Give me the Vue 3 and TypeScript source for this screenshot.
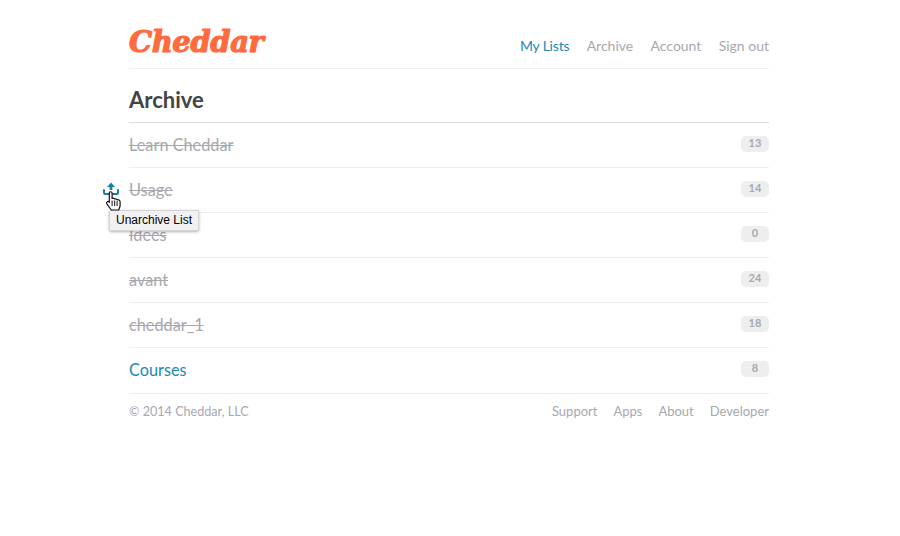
<script setup lang="ts">
interface ArchivedList {
  name: string;
  count: number;
  archived: boolean;
}

const navLinks = ["My Lists", "Archive", "Account", "Sign out"];
const footerLinks = ["Support", "Apps", "About", "Developer"];

const lists: ArchivedList[] = [
  { name: "Learn Cheddar", count: 13, archived: true },
  { name: "Usage", count: 14, archived: true },
  { name: "Idees", count: 0, archived: true },
  { name: "avant", count: 24, archived: true },
  { name: "cheddar_1", count: 18, archived: true },
  { name: "Courses", count: 8, archived: false },
];
</script>

<template>
  <div class="page">
    <header class="header">
      <a class="logo">Cheddar</a>
      <nav class="nav">
        <a
          v-for="(link, i) in navLinks"
          :key="link"
          class="nav-link"
          :class="{ active: i === 0 }"
        >{{ link }}</a>
      </nav>
    </header>

    <h1 class="title">Archive</h1>

    <ul class="lists">
      <li v-for="list in lists" :key="list.name" class="row">
        <span class="name" :class="{ archived: list.archived }">{{ list.name }}</span>
        <span class="count">{{ list.count }}</span>

        <template v-if="list.name === 'Usage'">
          <svg class="unarchive" width="18" height="14" viewBox="0 0 18 14">
            <path d="M9 0.5 L13 5 H10.4 V8 H7.6 V5 H5 Z" fill="#1a7fa8" />
            <path d="M2 8 V11 Q2 12 3 12 H15 Q16 12 16 11 V8" fill="none" stroke="#1a7fa8" stroke-width="2" stroke-linecap="round" />
          </svg>
          <svg class="hand" width="17" height="20" viewBox="0 0 16 20">
            <path
              d="M4.2 1 C5.4 0.4 6.6 1 6.6 2.4 V7.5 C7.6 7 8.8 7.2 9.2 8 C10.2 7.6 11.3 8 11.6 8.8 C12.8 8.5 14.6 9.2 14.6 10.8 V15 L13.2 19 H5.8 L1.4 12.8 C0.4 11.2 2.2 9.8 3.4 10.8 L3.8 11.4 V2.4 C3.8 1.8 3.9 1.2 4.2 1 Z"
              fill="#fff"
              stroke="#111"
              stroke-width="1.2"
              stroke-linejoin="round"
            />
            <path d="M6.6 9.5 V15 M9.2 9.5 V15 M11.6 10 V15" stroke="#111" stroke-width="1" fill="none" />
          </svg>
          <span class="tooltip">Unarchive List</span>
        </template>
      </li>
    </ul>

    <footer class="footer">
      <span class="copyright">© 2014 Cheddar, LLC</span>
      <nav class="footer-nav">
        <a v-for="link in footerLinks" :key="link" class="footer-link">{{ link }}</a>
      </nav>
    </footer>
  </div>
</template>

<style>
body {
  background: #fff;
}
</style>

<style scoped>
.page {
  width: 640px;
  margin-left: 129px;
  font-family: Lato, "Open Sans", sans-serif;
  color: #a8a8ae;
}

.header {
  height: 68px;
  border-bottom: 1px solid #eeeeee;
  display: flex;
  justify-content: space-between;
  align-items: flex-start;
}

.logo {
  margin-top: 23px;
  font-family: "DejaVu Serif", serif;
  font-weight: 700;
  font-style: italic;
  font-size: 29px;
  line-height: 38px;
  letter-spacing: -0.4px;
  color: #ff6b3d;
  -webkit-text-stroke: 1.2px #ff6b3d;
}

.nav {
  display: flex;
  gap: 17.3px;
  margin-top: 37px;
  font-size: 14px;
  line-height: 18px;
}

.nav-link {
  color: #a8a8ae;
}

.nav-link.active {
  color: #1f87b4;
  letter-spacing: -0.2px;
}

.title {
  margin: 0;
  height: 53px;
  padding-top: 18px;
  box-sizing: border-box;
  font-size: 22px;
  line-height: 26px;
  font-weight: 700;
  color: #444444;
}

.lists {
  list-style: none;
  margin: 0;
  padding: 0;
  border-top: 1px solid #dddddd;
}

.row {
  position: relative;
  height: 44px;
  border-bottom: 1px solid #eeeeee;
  display: flex;
  justify-content: space-between;
  align-items: flex-start;
  font-size: 16.3px;
}

.row:last-child {
  height: 45px;
}

.name {
  margin-top: 12px;
  line-height: 19px;
  color: #1f87b4;
}

.name.archived {
  color: #a8a8ae;
  text-decoration: line-through;
}

.count {
  margin-top: 13px;
  min-width: 28px;
  height: 16px;
  border-radius: 5px;
  background: #eeeeee;
  color: #a8a8ae;
  font-size: 11px;
  font-weight: 700;
  line-height: 14px;
  text-align: center;
}

.unarchive {
  position: absolute;
  left: -27px;
  top: 14px;
}

.hand {
  position: absolute;
  left: -24px;
  top: 23px;
  z-index: 2;
}

.tooltip {
  position: absolute;
  left: -20px;
  top: 42px;
  z-index: 1;
  width: 88px;
  height: 19px;
  background: #f1f1f1;
  border: 1px solid #d4d4d4;
  border-radius: 2px;
  box-shadow: 0 1px 3px rgba(0, 0, 0, 0.3);
  font-family: "Liberation Sans", Arial, sans-serif;
  font-size: 12px;
  line-height: 19px;
  color: #000;
  text-align: center;
}

.footer {
  display: flex;
  justify-content: space-between;
  padding-top: 9px;
  font-size: 13px;
  line-height: 17px;
}

.copyright {
  font-size: 12.6px;
}

.footer-nav {
  display: flex;
  gap: 16px;
}

.footer-link {
  color: #a8a8ae;
}
</style>
